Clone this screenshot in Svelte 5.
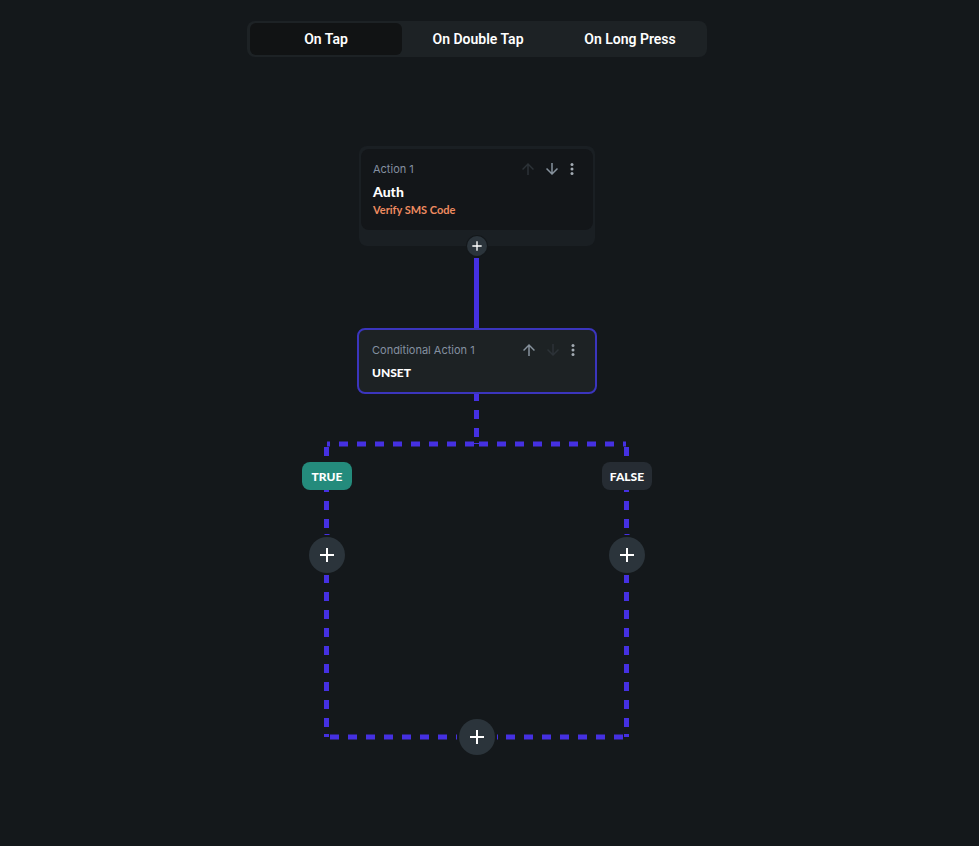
<script lang="ts">
	const tabs = ['On Tap', 'On Double Tap', 'On Long Press'];
	let active = $state('On Tap');

	// branch connector, in the branch's own coordinates
	const stem = 'M174.5 0V7M174.5 16V25M174.5 34V43';
	const forkLeft = 'M172 50H25';
	const forkRight = 'M177 50H324';
</script>

{#snippet plus(size: number)}
	<svg width={size} height={size} viewBox="0 0 24 24" aria-hidden="true">
		<path fill="currentColor" d="M19 13h-6v6h-2v-6H5v-2h6V5h2v6h6v2z" />
	</svg>
{/snippet}

{#snippet tools(name: string, canUp: boolean, canDown: boolean)}
	<div class="tools">
		<button class="tool" disabled={!canUp} aria-label="Move {name} up">
			<svg width="18" height="18" viewBox="0 0 24 24">
				<path d="M4 12l1.41 1.41L11 7.83V20h2V7.83l5.58 5.59L20 12l-8-8-8 8z" />
			</svg>
		</button>
		<button class="tool" disabled={!canDown} aria-label="Move {name} down">
			<svg width="18" height="18" viewBox="0 0 24 24">
				<path d="M20 12l-1.41-1.41L13 16.17V4h-2v12.17l-5.58-5.59L4 12l8 8 8-8z" />
			</svg>
		</button>
		<button class="tool more" aria-label="{name} menu">
			<svg width="18" height="18" viewBox="0 0 24 24">
				<circle cx="12" cy="6" r="2" />
				<circle cx="12" cy="12" r="2" />
				<circle cx="12" cy="18" r="2" />
			</svg>
		</button>
	</div>
{/snippet}

<main>
	<div class="tabs" role="tablist">
		{#each tabs as tab}
			<button
				class="tab"
				class:active={active === tab}
				role="tab"
				aria-selected={active === tab}
				onclick={() => (active = tab)}>{tab}</button
			>
		{/each}
	</div>

	<section class="flow">
		<article class="action">
			<div class="body">
				<header>
					<span class="label">Action 1</span>
					{@render tools('Action 1', false, true)}
				</header>
				<h2>Auth</h2>
				<p>Verify SMS Code</p>
			</div>
			<button class="add small" aria-label="Add action">{@render plus(16)}</button>
		</article>

		<svg class="wire link" width="350" height="70" viewBox="0 0 350 70" aria-hidden="true">
			<path d="M174.5 0V70" />
		</svg>

		<article class="condition">
			<header>
				<span class="label">Conditional Action 1</span>
				{@render tools('Conditional Action 1', true, false)}
			</header>
			<h2>UNSET</h2>
		</article>

		<div class="branch">
			<svg class="wire under" width="350" height="361" viewBox="0 0 350 361" aria-hidden="true">
				<path d={stem} />
				<path class="hair" d="M172 49.5H177" />
				<path class="dash" d={forkLeft} />
				<path class="dash" d={forkRight} />
				<!-- true and false arms -->
				{#each [24.5, 324.5] as x}
					<path class="dash" d="M{x} 53V135" />
					<path class="hair" d="M{x - 2} 140.5H{x + 3}" />
					<path d="M{x} 181V189" />
					<path class="dash" d="M{x} 198V334" />
					<path d="M{x} 340V343" />
				{/each}
				<path class="dash" d="M28 343H146" />
				<path d="M154 343H155M195 343H196" />
				<path class="dash" d="M204 343H322" />
			</svg>
			<div class="arms">
				<div class="arm">
					<span class="badge true">TRUE</span>
					<button class="add" aria-label="Add action when true">{@render plus(24)}</button>
				</div>
				<div class="arm">
					<span class="badge">FALSE</span>
					<button class="add" aria-label="Add action when false">{@render plus(24)}</button>
				</div>
			</div>
			<button class="add" aria-label="Add action after condition">{@render plus(24)}</button>
		</div>
	</section>
</main>

<style>
	:global(body) {
		margin: 0;
		background: #14181b;
	}

	main {
		display: flex;
		flex-direction: column;
		align-items: center;
		gap: 89px;
		padding: 21px 25px 40px 0;
		color: #fff;
		font-family: Lato, sans-serif;
	}

	button {
		border: 0;
		padding: 0;
		background: none;
		color: inherit;
		cursor: pointer;
	}

	svg {
		display: block;
	}

	.tabs {
		display: grid;
		grid-template-columns: repeat(3, 1fr);
		box-sizing: border-box;
		width: 100%;
		max-width: 460px;
		padding: 2px 1px 2px 3px;
		border-radius: 8px;
		background: #1d2225;
	}

	.tab {
		height: 32px;
		border-radius: 6px;
		font: 600 14px Roboto, sans-serif;
	}

	.tab.active {
		background: #111314;
	}

	.flow {
		display: flex;
		flex-direction: column;
		align-items: center;
	}

	.action {
		position: relative;
		box-sizing: border-box;
		width: 236px;
		padding: 3px 2px 16px;
		border-radius: 8px;
		background: #1a1f23;
	}

	.body {
		padding: 10px 13px 13px 12px;
		border-radius: 8px;
		background: #131619;
	}

	header {
		display: flex;
		align-items: center;
		justify-content: space-between;
		height: 20px;
		margin-bottom: 2px;
	}

	.label {
		color: #8490a0;
		font-family: Inter, sans-serif;
		font-size: 11px;
	}

	h2 {
		margin: 0;
		font-size: 14px;
		font-weight: 900;
		line-height: 22px;
	}

	p {
		margin: 0;
		color: #ee8b60;
		font-size: 11px;
		font-weight: 700;
		line-height: 14px;
	}

	.tools {
		display: flex;
	}

	.tool {
		display: flex;
		align-items: center;
		justify-content: center;
		width: 24px;
		height: 24px;
		color: #87929d;
	}

	.tool:disabled {
		color: #2c3237;
		cursor: default;
	}

	.tool.more {
		width: 16px;
		color: #a3abb3;
	}

	.tool svg {
		flex: none;
		fill: currentColor;
	}

	.add {
		position: relative;
		display: grid;
		place-items: center;
		width: 36px;
		height: 36px;
		border-radius: 50%;
		background: #2b343b;
	}

	.add.small {
		position: absolute;
		bottom: -10px;
		left: 50%;
		width: 20px;
		height: 20px;
		margin-left: -10px;
		box-shadow: 0 0 0 1px #14181b;
	}

	.wire {
		fill: none;
		stroke: #4530e2;
		stroke-width: 5;
	}

	.link {
		margin-top: 12px;
	}

	.condition {
		box-sizing: border-box;
		width: 240px;
		padding: 10px 14px 8px 13px;
		border: 2px solid #3b35bd;
		border-radius: 8px;
		background: #1d2224;
	}

	.condition h2 {
		font-size: 12px;
	}

	.branch {
		position: relative;
		display: flex;
		flex-direction: column;
		align-items: center;
		gap: 146px;
		width: 350px;
		padding-top: 68px;
	}

	.under {
		position: absolute;
		inset: 0;
	}

	.dash {
		stroke-dasharray: 9 9;
	}

	.hair {
		stroke-width: 1;
	}

	.arms {
		position: relative;
		display: flex;
		justify-content: space-between;
		width: 100%;
	}

	.arm {
		display: flex;
		flex-direction: column;
		align-items: center;
		gap: 47px;
	}

	.badge {
		width: 50px;
		padding-top: 2px;
		border-radius: 8px;
		background: #262c33;
		font-size: 12px;
		font-weight: 900;
		line-height: 26px;
		text-align: center;
	}

	.badge.true {
		background: #248b7c;
	}
</style>
